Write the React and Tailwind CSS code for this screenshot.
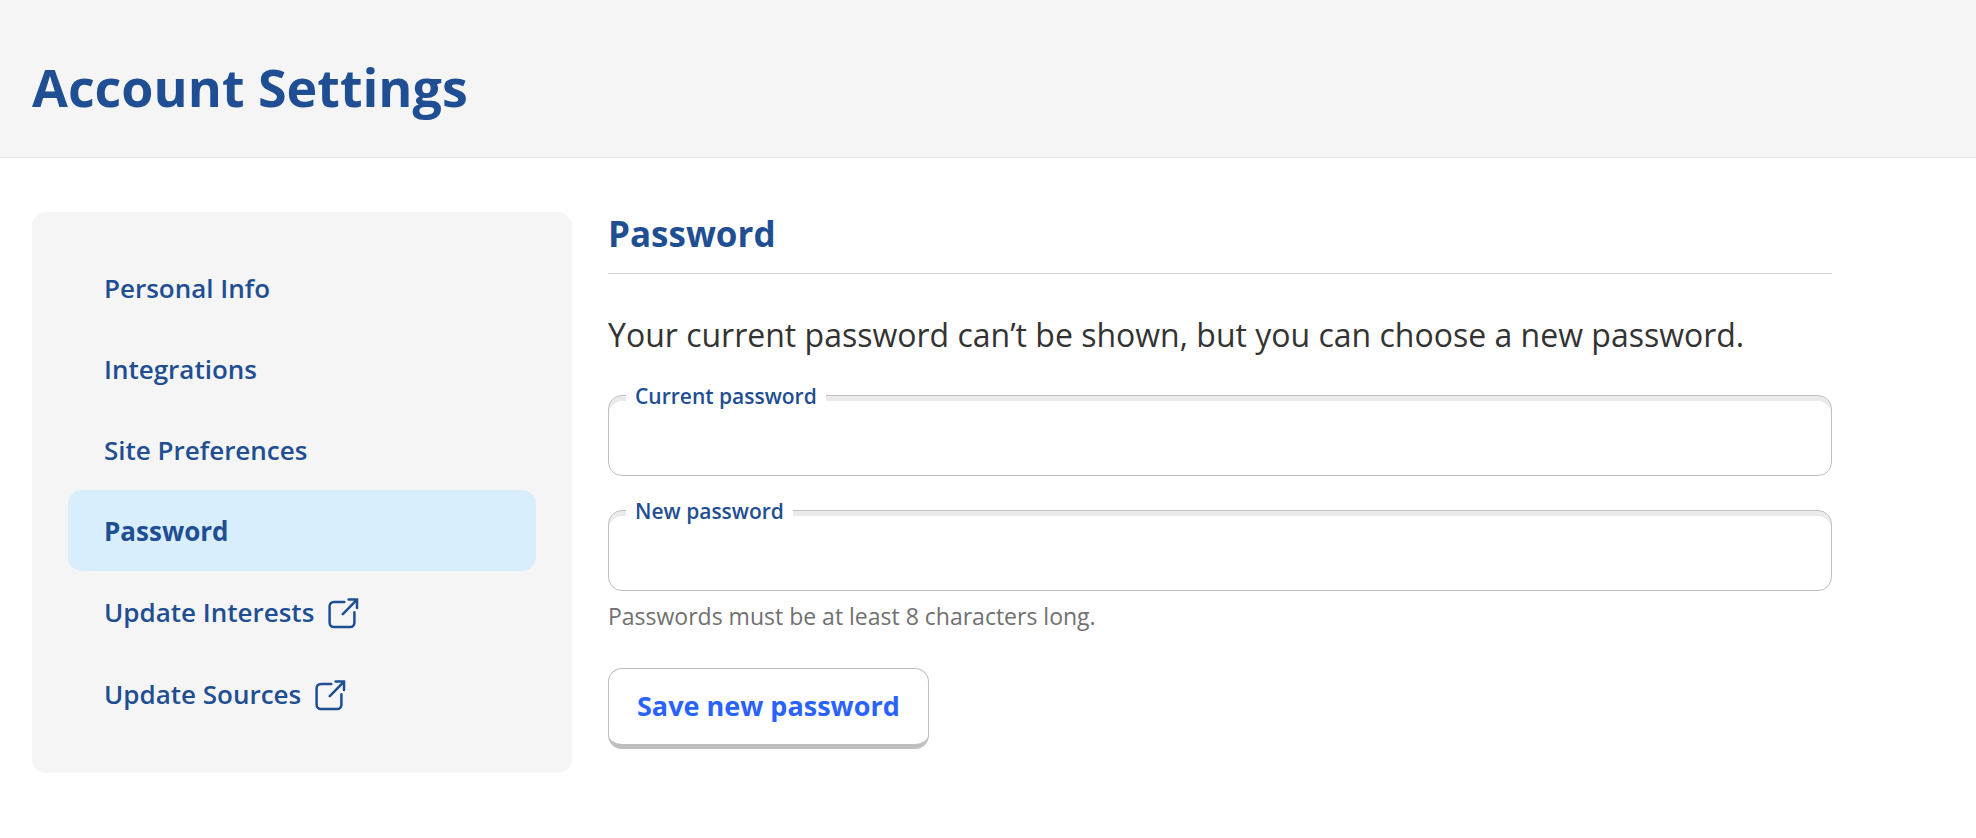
const navItems = [
  { label: "Personal Info" },
  { label: "Integrations" },
  { label: "Site Preferences" },
  { label: "Password", active: true },
  { label: "Update Interests", external: true },
  { label: "Update Sources", external: true },
];

function ExternalIcon() {
  return (
    <svg
      aria-hidden="true"
      viewBox="0 0 32 32"
      className="mt-1 h-8 w-8 shrink-0"
      fill="none"
      stroke="currentColor"
      strokeWidth="2.5"
      strokeLinecap="round"
    >
      <path d="M16.3 4H5.8a4.2 4.2 0 0 0-4.2 4.2v16.6A4.2 4.2 0 0 0 5.8 29h16.4a4.2 4.2 0 0 0 4.2-4.2V14.2" />
      <path d="M20.6 1.6H29V10M29 1.6 14.8 16.2" strokeLinejoin="miter" />
    </svg>
  );
}

function NavItem({ label, active, external }) {
  return (
    <li>
      <a
        href="#"
        aria-current={active ? "page" : undefined}
        className={
          active
            ? "flex items-center rounded-[14px] bg-[#d9eefd] px-9 pt-[21px] pb-5 text-[26px] leading-10 font-bold"
            : external
              ? "flex items-center gap-3.5 px-9 pt-[21px] pb-[21px] text-[26px] leading-10 font-semibold"
              : "flex items-center px-9 pt-[21px] pb-5 text-[26px] leading-10 font-semibold"
        }
      >
        {label}
        {external && <ExternalIcon />}
      </a>
    </li>
  );
}

function PasswordField({ id, label, autoComplete }) {
  return (
    <div className="relative">
      <input
        id={id}
        type="password"
        autoComplete={autoComplete}
        className="block h-[81px] w-full rounded-[14px] border border-[#bfbfbf] bg-white px-6 text-[26px] text-[#333] shadow-[inset_0_5px_0_#eaeaea]"
      />
      <label
        htmlFor={id}
        className="absolute -top-[15px] left-[18px] bg-white px-[9px] text-[21px] leading-8 font-semibold text-[#1f4e92]"
      >
        {label}
      </label>
    </div>
  );
}

export default function App() {
  return (
    <div className="min-h-screen bg-white font-['Open_Sans',sans-serif] text-[#1f4e92]">
      <header className="border-b border-[#e6e6e6] bg-[#f5f5f5] px-8 pt-[51px] pb-[34px]">
        <h1 className="text-[52px] leading-[72px] font-bold">Account Settings</h1>
      </header>
      <div className="flex max-w-[1832px] items-start gap-9 pt-[54px] pl-8">
        <nav
          aria-label="Account settings"
          className="w-[30%] shrink-0 rounded-[14px] bg-[#f5f5f5] px-9 pt-[35px] pb-[38px]"
        >
          <ul>
            {navItems.map((item) => (
              <NavItem key={item.label} {...item} />
            ))}
          </ul>
        </nav>
        <main className="min-w-0 flex-1">
          <h2 className="border-b border-[#d5d5d5] pb-[17px] text-[35px] leading-[44px] font-bold">
            Password
          </h2>
          <p className="pt-[38px] text-[32px] leading-[45px] text-[#333]">
            Your current password can’t be shown, but you can choose a new password.
          </p>
          <form className="pt-[38px]" onSubmit={(e) => e.preventDefault()}>
            <div className="flex flex-col gap-[34px]">
              <PasswordField
                id="current-password"
                label="Current password"
                autoComplete="current-password"
              />
              <PasswordField id="new-password" label="New password" autoComplete="new-password" />
            </div>
            <p className="pt-[9px] text-[23px] leading-8 text-[#707070]">
              Passwords must be at least 8 characters long.
            </p>
            <button
              type="submit"
              className="mt-9 h-[81px] rounded-[14px] border border-b-[5px] border-[#bfbfbf] bg-white px-7 text-[27px] font-bold text-[#2962ff]"
            >
              Save new password
            </button>
          </form>
        </main>
      </div>
    </div>
  );
}
